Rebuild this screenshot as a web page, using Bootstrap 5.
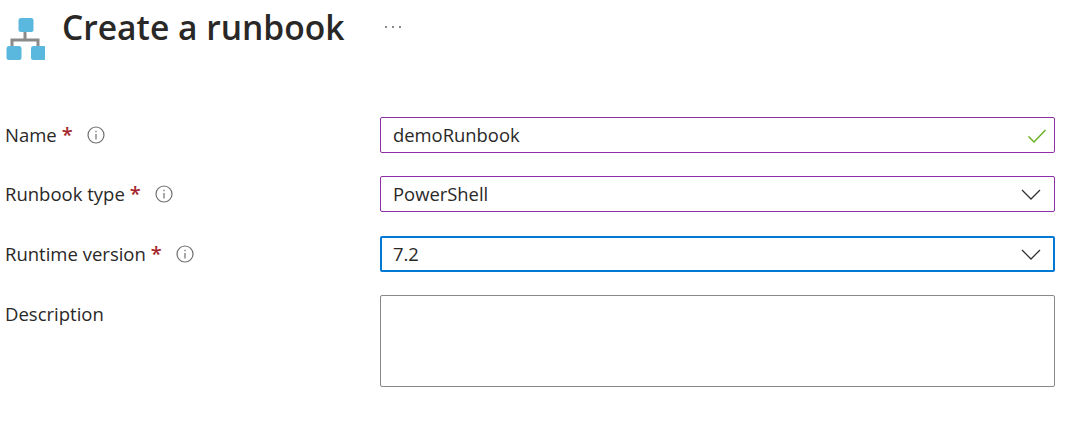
<!DOCTYPE html>
<html lang="en">

<head>
    <meta charset="UTF-8">
    <meta name="viewport" content="width=device-width, initial-scale=1.0">
    <title>Create a runbook</title>
    <link rel="stylesheet" href="https://cdn.jsdelivr.net/npm/bootstrap@5.3.3/dist/css/bootstrap.min.css">
    <script src="https://cdn.jsdelivr.net/npm/bootstrap@5.3.3/dist/js/bootstrap.bundle.min.js"></script>
    <style>
        body {
            font-family: "Open Sans", "Noto Sans", sans-serif;
            color: #292827;
            background: #fff;
            overflow: hidden;
        }

        .page-wrap {
            padding: 0 19px 0 5px;
        }

        .blade-head {
            height: 117px;
        }

        .blade-icon {
            margin-top: 17px;
            margin-right: 17px;
        }

        .blade-title {
            font-family: "Open Sans", sans-serif;
            font-size: 33.6px;
            font-weight: 600;
            line-height: 44px;
            margin: 5px 0 0;
            color: #292827;
        }

        .blade-more {
            margin: 18px 0 0 40px;
        }

        .field-row {
            margin-bottom: 23.4px;
        }

        .field-label {
            width: 375px;
            flex: none;
            font-size: 18.5px;
            line-height: 36px;
        }

        .label-top {
            line-height: 38px;
        }

        .req-mark {
            color: #a4262c;
            margin-left: 5px;
            font-size: 20px;
            font-weight: 600;
        }

        .info-mark {
            margin-left: 14px;
        }

        .field-box {
            position: relative;
            flex: 1;
            height: 36px;
            border: 1px solid #8a8886;
            border-radius: 2px;
            padding: 0 12px;
            font-size: 18.4px;
            line-height: 34px;
            color: #292827;
            background: #fff;
        }

        .field-done {
            border-color: #8e2fa8;
        }

        .field-focus {
            border: 2px solid #0078d4;
            padding: 0 11px;
            line-height: 32px;
        }

        .field-area {
            height: 92px;
        }

        .field-icon {
            position: absolute;
            right: 13px;
            top: 9px;
        }

        .field-check {
            right: 7px;
        }

        .field-focus .field-icon {
            right: 12px;
            top: 8px;
        }
    </style>
</head>

<body>
    <main class="page-wrap">

        <div class="blade-head d-flex align-items-start">
            <svg class="blade-icon" width="40" height="44" viewBox="0 0 40 44">
                <path d="M20 14v9M7 31v-8h26v8" fill="none" stroke="#8a8a8a" stroke-width="3" />
                <rect x="13.500" y="1" width="15" height="14" rx="2.500" fill="#5ab8de" />
                <rect x="1.500" y="29" width="15" height="14" rx="2.500" fill="#5ab8de" />
                <rect x="26" y="29" width="15" height="14" rx="2.500" fill="#5ab8de" />
            </svg>
            <h1 class="blade-title">Create a runbook</h1>
            <svg class="blade-more" width="18" height="18" viewBox="0 0 18 18" fill="#505050">
                <circle cx="2" cy="9" r="0.900" />
                <circle cx="9" cy="9" r="0.900" />
                <circle cx="16" cy="9" r="0.900" />
            </svg>
        </div>

        <form>
            <div class="field-row d-flex">
                <div class="field-label d-flex align-items-center">Name<span class="req-mark">*</span>
                    <svg class="info-mark" width="18" height="18" viewBox="0 0 18 18">
                        <circle cx="9" cy="9" r="8" fill="none" stroke="#707070" stroke-width="1.200" />
                        <path d="M9 8v5.500M9 4.800v1.400" stroke="#707070" stroke-width="1.200" />
                    </svg>
                </div>
                <div class="field-box field-done">demoRunbook
                    <svg class="field-icon field-check" width="20" height="18" viewBox="0 0 20 18">
                        <path d="M1.500 9.500l5.500 5.500L18.500 3" fill="none" stroke="#6bb024" stroke-width="1.500" />
                    </svg>
                </div>
            </div>

            <div class="field-row d-flex">
                <div class="field-label d-flex align-items-center">Runbook type<span class="req-mark">*</span>
                    <svg class="info-mark" width="18" height="18" viewBox="0 0 18 18">
                        <circle cx="9" cy="9" r="8" fill="none" stroke="#707070" stroke-width="1.200" />
                        <path d="M9 8v5.500M9 4.800v1.400" stroke="#707070" stroke-width="1.200" />
                    </svg>
                </div>
                <div class="field-box field-done">PowerShell
                    <svg class="field-icon" width="20" height="18" viewBox="0 0 20 18">
                        <path d="M1 4l9 9 9-9" fill="none" stroke="#323130" stroke-width="1.300" />
                    </svg>
                </div>
            </div>

            <div class="field-row d-flex">
                <div class="field-label d-flex align-items-center">Runtime version<span class="req-mark">*</span>
                    <svg class="info-mark" width="18" height="18" viewBox="0 0 18 18">
                        <circle cx="9" cy="9" r="8" fill="none" stroke="#707070" stroke-width="1.200" />
                        <path d="M9 8v5.500M9 4.800v1.400" stroke="#707070" stroke-width="1.200" />
                    </svg>
                </div>
                <div class="field-box field-focus">7.2
                    <svg class="field-icon" width="20" height="18" viewBox="0 0 20 18">
                        <path d="M1 4l9 9 9-9" fill="none" stroke="#323130" stroke-width="1.300" />
                    </svg>
                </div>
            </div>

            <div class="field-row d-flex">
                <div class="field-label label-top">Description</div>
                <div class="field-box field-area"></div>
            </div>
        </form>
    </main>
</body>

</html>
